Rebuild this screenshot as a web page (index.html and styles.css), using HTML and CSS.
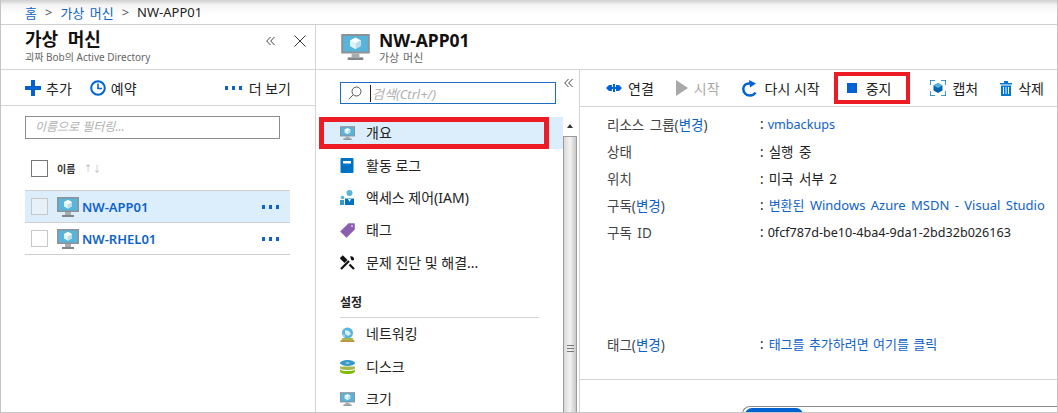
FILE: index.html
```html
<!DOCTYPE html>
<html lang="ko">
<head>
  <meta charset="UTF-8" />
  <title>NW-APP01 - 가상 머신</title>
  <link rel="stylesheet" href="styles.css">
</head>
<body>
  <svg class="defs" width="0" height="0">
    <symbol id="vm" viewBox="0 0 22 20">
      <rect x="0" y="0" width="22" height="15" fill="#8c9296"/>
      <rect x="1.5" y="1.5" width="19" height="12" fill="#59b4d9"/>
      <path d="M11 2.7l4 2.2v4.4l-4 2.3-4-2.3V4.900z" fill="#fff"/>
      <path d="M11 7.200l4-2.300v4.400l-4 2.300z" fill="#b8dff0"/>
      <path d="M11 7.200L7 4.900v4.400l4 2.300z" fill="#dff2fa"/>
      <rect x="8" y="15" width="6" height="3" fill="#a7acaf"/>
      <rect x="5" y="18" width="12" height="2" fill="#7f8589"/>
    </symbol>
    <symbol id="chev" viewBox="0 0 9 8">
      <path d="M4.500 0L.7 4l3.800 4M8.500 0L4.700 4l3.800 4" fill="none" stroke="#444"/>
    </symbol>
  </svg>

  <div class="frame">
    <nav class="crumbs">
      <a href="#">홈</a><span class="sep">&gt;</span><a href="#">가상 머신</a><span class="sep">&gt;</span><span>NW-APP01</span>
    </nav>

    <div class="panes">
      <!-- left list blade -->
      <section class="list-blade">
        <div class="blade-head">
          <div>
            <h1>가상 머신</h1>
            <p>괴짜 Bob의 Active Directory</p>
          </div>
          <div class="head-tools">
            <svg width="9" height="8"><use href="#chev"/></svg>
            <svg width="12" height="12" viewBox="0 0 12 12"><path d="M.5.5l11 11M11.500.5l-11 11" stroke="#333" fill="none"/></svg>
          </div>
        </div>

        <div class="list-tools">
          <span class="tool">
            <svg width="16" height="16" viewBox="0 0 16 16"><path d="M6 0h4v6h6v4h-6v6H6v-6H0V6h6z" fill="#0063d1"/></svg>추가
          </span>
          <span class="tool">
            <svg width="16" height="16" viewBox="0 0 16 16"><circle cx="8" cy="8" r="6.800" fill="none" stroke="#0063d1" stroke-width="2"/><path d="M8 3.500V8.500h4" fill="none" stroke="#0063d1" stroke-width="1.600"/></svg>예약
          </span>
          <span class="tool tool-more"><span class="dots"></span>더 보기</span>
        </div>

        <div class="filter">이름으로 필터링...</div>

        <div class="list-head">
          <span class="check check-dark"></span>
          <b>이름</b>
          <span class="sort">↑↓</span>
        </div>

        <div class="vm-row vm-row-on">
          <span class="check"></span>
          <svg class="vm-ico" width="22" height="20"><use href="#vm"/></svg>
          <a href="#">NW-APP01</a>
          <span class="dots"></span>
        </div>
        <div class="vm-row">
          <span class="check"></span>
          <svg class="vm-ico" width="22" height="20"><use href="#vm"/></svg>
          <a href="#">NW-RHEL01</a>
          <span class="dots"></span>
        </div>
      </section>

      <!-- resource blade -->
      <section class="res-blade">
        <div class="res-head">
          <svg width="29" height="26"><use href="#vm"/></svg>
          <div>
            <h2>NW-APP01</h2>
            <p>가상 머신</p>
          </div>
        </div>

        <div class="res-body">
          <aside class="menu">
            <div class="menu-top">
              <div class="search">
                <svg width="14" height="14" viewBox="0 0 14 14"><circle cx="8.500" cy="5.500" r="4.500" fill="none" stroke="#555"/><path d="M5.300 8.700L.8 13.200" stroke="#555" fill="none"/></svg>
                <span class="caret"></span>
                <span>검색(Ctrl+/)</span>
              </div>
              <svg class="chev-menu" width="9" height="8"><use href="#chev"/></svg>
            </div>

            <div class="menu-main">
              <div class="menu-list">
                <div class="menu-item menu-item-on">
                  <svg width="15" height="14"><use href="#vm"/></svg>개요
                  <span class="red-box red-box-menu"></span>
                </div>
                <div class="menu-item">
                  <svg width="15" height="15" viewBox="0 0 15 15"><rect x="0.500" width="13" height="15" rx="1" fill="#0072c6"/><rect x="3" y="3" width="8" height="2.500" fill="#fff"/></svg>활동 로그
                </div>
                <div class="menu-item">
                  <svg width="15" height="15" viewBox="0 0 15 15"><circle cx="9.500" cy="3" r="3" fill="#59b4d9"/><path d="M5 15V8.500h9V15z" fill="#0072c6"/><circle cx="2.500" cy="7.500" r="1.800" fill="#59b4d9"/><path d="M0 15v-5h4v5z" fill="#3999c6"/><path d="M8 9l1.500 3L11 9z" fill="#fff"/></svg>액세스 제어(IAM)
                </div>
                <div class="menu-item">
                  <svg width="15" height="15" viewBox="0 0 15 15"><path d="M8.500.3h5.200c.7 0 1.100.4 1.100 1.100v5.200L6.500 14.800 0.200 8.500z" fill="#8a5fb0"/><circle cx="12" cy="3" r="1" fill="#d9c6ea"/></svg>태그
                </div>
                <div class="menu-item">
                  <svg width="15" height="15" viewBox="0 0 15 15"><path d="M1 14L9 6M2 1l4 4-1.500 1.500-4-4M9.500 9.500L14 14" stroke="#111" stroke-width="2.200" fill="none"/><path d="M10 1.500a3 3 0 0 1 4 3.500l-2 .5-1-1-.5-2z" fill="#111"/></svg>문제 진단 및 해결...
                </div>

                <div class="menu-section">설정</div>

                <div class="menu-item">
                  <svg width="15" height="15" viewBox="0 0 15 15"><circle cx="7.500" cy="6" r="5.500" fill="#59b4d9"/><path d="M5 3l4 1 2 3-3 2-3-2zM3 7l2 2-1 1z" fill="#d8eef7"/><path d="M2.500 11h10l2 4H.5z" fill="#a3b94e"/><rect x="0.500" y="13.500" width="14" height="1.500" fill="#c98a3c"/></svg>네트워킹
                </div>
                <div class="menu-item">
                  <svg width="15" height="14" viewBox="0 0 15 14"><ellipse cx="7.500" cy="3" rx="7.500" ry="3" fill="#3999c6"/><ellipse cx="7.500" cy="3" rx="2" ry="0.700" fill="#b8dff0"/><path d="M0 6.500h15v1.500c0 1.200-3 2-7.500 2S0 9.200 0 8z" fill="#a3b94e"/><path d="M0 9.500c1 1 4 1.500 7.500 1.500s6.500-.5 7.500-1.500V11c0 1.700-3 3-7.500 3S0 12.700 0 11z" fill="#7fba00"/></svg>디스크
                </div>
                <div class="menu-item">
                  <svg width="15" height="14"><use href="#vm"/></svg>크기
                </div>
              </div>

              <div class="scroll">
                <span class="scroll-up"></span>
                <div class="scroll-thumb"><span class="grip"></span></div>
              </div>
            </div>
          </aside>

          <div class="detail">
            <div class="cmd-bar">
              <span class="cmd">
                <svg width="16" height="10" viewBox="0 0 16 10"><path d="M0 5l3-3h3v2h4V2h3l3 3-3 3h-3V6H6v2H3z" fill="#0063d1"/><path d="M7 1h2v3H7zM7 6h2v3H7z" fill="#0063d1"/></svg>연결
              </span>
              <span class="cmd cmd-off">
                <svg width="12" height="16" viewBox="0 0 12 16"><path d="M0 0l12 8-12 8z" fill="#a9a9a9"/></svg>시작
              </span>
              <span class="cmd cmd-restart">
                <svg width="15" height="17" viewBox="0 0 15 17"><path d="M8 3.500C3.500 3 1.300 6 1.300 9c0 3.500 2.700 6.500 6.700 6.500 2.500 0 4.500-1.200 5.500-3" fill="none" stroke="#0063d1" stroke-width="2.500"/><path d="M7 0l7 3.500-6 4z" fill="#0063d1"/></svg>다시 시작
              </span>
              <span class="cmd cmd-stop">
                <span class="stop-sq"></span>중지
                <span class="red-box"></span>
              </span>
              <span class="cmd">
                <svg width="16" height="16" viewBox="0 0 16 16"><path d="M0 5V0h5M11 0h5v5M16 11v5h-5M5 16H0v-5" fill="none" stroke="#0078d4" stroke-width="1.500"/><path d="M8 3l4.500 2.500v5L8 13l-4.500-2.500v-5z" fill="#0063b1"/><path d="M8 3l4.500 2.500L8 8 3.500 5.500z" fill="#59b4d9"/></svg>캡처
              </span>
              <span class="cmd">
                <svg width="12" height="15" viewBox="0 0 12 15"><path d="M0 2h12v1.500H0zM4 0h4v2H4z" fill="#0078d4"/><path d="M1 4.500h10V15H1z" fill="#0078d4"/><path d="M3.500 6v7M6 6v7M8.500 6v7" stroke="#fff"/></svg>삭제
              </span>
            </div>

            <div class="props">
              <div class="prop"><span class="prop-k">리소스 그룹(<a href="#">변경</a>)</span><span class="prop-v">:<a class="latin" href="#">vmbackups</a></span></div>
              <div class="prop"><span class="prop-k">상태</span><span class="prop-v">:<span class="val">실행 중</span></span></div>
              <div class="prop"><span class="prop-k">위치</span><span class="prop-v">:<span class="val">미국 서부 2</span></span></div>
              <div class="prop"><span class="prop-k">구독(<a href="#">변경</a>)</span><span class="prop-v">:<a class="val wide" href="#">변환된 Windows Azure MSDN - Visual Studio</a></span></div>
              <div class="prop"><span class="prop-k">구독 ID</span><span class="prop-v">:<span class="latin">0fcf787d-be10-4ba4-9da1-2bd32b026163</span></span></div>
              <div class="prop prop-tag"><span class="prop-k">태그(<a href="#">변경</a>)</span><span class="prop-v">:<a class="val tight" href="#">태그를 추가하려면 여기를 클릭</a></span></div>
            </div>

            <div class="bottom">
              <div class="pill"><span class="pill-on"></span></div>
            </div>
          </div>
        </div>
      </section>
    </div>
  </div>
</body>
</html>
```

FILE: styles.css
```css
* { margin: 0; padding: 0; box-sizing: border-box; }

html, body {
  width: 1058px;
  height: 413px;
  overflow: hidden;
  background: #fff;
}

body {
  font-family: "Noto Sans", "Noto Sans CJK KR", sans-serif;
  font-size: 14px;
  color: #222;
}

a { color: #0f62c9; text-decoration: none; }

.defs { position: absolute; }

.frame {
  width: 1058px;
  height: 413px;
  display: flex;
  flex-direction: column;
  border: 1px solid #c4c4c4;
  border-top: 0;
  overflow: hidden;
}

.crumbs {
  height: 25px;
  flex: none;
  display: flex;
  align-items: center;
  padding-left: 24px;
  font-size: 13px;
  word-spacing: 2px;
  background: linear-gradient(#cfcfcf 0, #f4f4f4 5px, #fff 14px);
  border-bottom: 1px solid #cfcfcf;
}

.sep { margin: 0 8px; color: #555; }

.panes { flex: 1; display: flex; min-height: 0; }

/* left blade */
.list-blade {
  width: 315px;
  flex: none;
  border-right: 1px solid #d4d4d4;
}

.blade-head {
  height: 45px;
  display: flex;
  justify-content: space-between;
  padding: 2px 9px 0 24px;
  border-bottom: 1px solid #d4d4d4;
}

.blade-head h1 { font-size: 18px; font-weight: 700; line-height: 24px; word-spacing: 5px; color: #111; }
.blade-head p { font-size: 10px; line-height: 12px; color: #666; }

.head-tools { display: flex; align-items: center; gap: 19px; height: 28px; }

.list-tools {
  height: 36px;
  display: flex;
  align-items: center;
  padding: 0 24px 0 24px;
  gap: 18px;
  border-bottom: 1px solid #d4d4d4;
}

.tool { display: flex; align-items: center; gap: 5px; }
.tool-more { margin-left: auto; gap: 6px; }

.dots {
  width: 20px;
  height: 4px;
  flex: none;
  background: radial-gradient(circle 2px, #0f62c9 95%, transparent) 0 0 / 7px 4px repeat-x;
}

.filter {
  width: 255px;
  height: 23px;
  margin: 10px 0 0 24px;
  padding: 0 9px;
  border: 1px solid #8c8c8c;
  font-size: 12px;
  line-height: 20px;
  font-style: italic;
  color: #b0b0b0;
}

.list-head {
  height: 51px;
  display: flex;
  align-items: center;
  margin-left: 30px;
  padding-top: 8px;
  font-size: 10px;
}

.list-head b { margin-left: 9px; color: #333; }
.sort { margin-left: 8px; font-size: 9px; color: #bbb; }

.check {
  width: 17px;
  height: 17px;
  flex: none;
  border: 1px solid #c8c8c8;
  background: #fff;
}

.check-dark { border-color: #777; }

.vm-row {
  width: 265px;
  height: 32px;
  margin-left: 24px;
  display: flex;
  align-items: center;
  padding: 0 10px 0 6px;
  border-top: 1px solid #cfcfcf;
  font-size: 13px;
  font-weight: 600;
}

.vm-row:last-child { height: 33px; border-bottom: 1px solid #cfcfcf; }
.vm-row-on { background: #dcedfb; }
.vm-row-on .check { background: #e6f1fa; }
.vm-ico { margin: 0 3px 0 9px; flex: none; }
.vm-row .dots { margin-left: auto; }

/* right blade */
.res-blade { flex: 1; min-width: 0; display: flex; flex-direction: column; }

.res-head {
  height: 45px;
  flex: none;
  display: flex;
  align-items: center;
  gap: 9px;
  padding: 0 0 0 25px;
  border-bottom: 1px solid #d4d4d4;
}

.res-head h2 { font-size: 17.500px; font-weight: 700; line-height: 21px; color: #111; }
.res-head p { font-size: 11px; line-height: 13px; word-spacing: 1px; color: #666; }

.res-body { flex: 1; display: flex; min-height: 0; }

.menu {
  width: 264px;
  flex: none;
  display: flex;
  flex-direction: column;
  border-right: 1px solid #d4d4d4;
}

.menu-top { height: 47px; flex: none; display: flex; padding: 12px 0 0 24px; }

.search {
  width: 216px;
  height: 22px;
  display: flex;
  align-items: center;
  padding-left: 7px;
  border: 1px solid #1b6ec2;
  font-size: 13px;
  font-style: italic;
  color: #b0b0b0;
}

.caret { width: 1px; height: 17px; margin: 0 1px 0 8px; background: #222; }

.chev-menu { margin: -3px 0 0 8px; }

.menu-main { flex: 1; display: flex; min-height: 0; }

.menu-list { flex: 1; padding-left: 3px; }

.menu-item {
  height: 32.400px;
  display: flex;
  align-items: center;
  gap: 11px;
  padding: 0 0 2px 21px;
  position: relative;
}

.menu-item svg { flex: none; margin-top: 2px; }
.menu-item-on { background: #dcedfb; }

.menu-section {
  height: 33px;
  margin: 6px 24px 0 21px;
  padding-top: 8px;
  font-size: 12px;
  font-weight: 600;
  border-bottom: 1px solid #d4d4d4;
}

.red-box { position: absolute; border: 4px solid #ed1c24; inset: 0; }
.red-box-menu { border-width: 5px; right: 14px; }

.scroll {
  width: 16px;
  flex: none;
  position: relative;
  background: #fff;
}

.scroll-up {
  position: absolute;
  top: 7px;
  left: 4px;
  border: 3px solid transparent;
  border-top: 0;
  border-bottom: 4px solid #333;
}

.scroll-thumb {
  position: absolute;
  top: 19px;
  bottom: -149px;
  left: 0;
  right: 2px;
  display: flex;
  align-items: center;
  justify-content: center;
  background: linear-gradient(90deg, #d8d8d8, #f4f4f4 50%, #c8c8c8);
  border: 1px solid #9a9a9a;
}

.grip {
  width: 7px;
  height: 7px;
  border-top: 1px solid #777;
  border-bottom: 1px solid #777;
  background: linear-gradient(#777, #777) center / 7px 1px no-repeat;
}

.detail { flex: 1; min-width: 0; display: flex; flex-direction: column; }

.cmd-bar {
  height: 37px;
  flex: none;
  display: flex;
  align-items: center;
  padding-left: 26px;
  border-bottom: 1px solid #d4d4d4;
}

.cmd {
  display: flex;
  align-items: center;
  gap: 6px;
  margin-right: 22px;
  position: relative;
  white-space: nowrap;
}

.cmd-off { color: #a9a9a9; }
.cmd-restart { gap: 8px; }
.cmd-stop { padding: 0 19px 0 13px; height: 32px; margin: 0 20px 0 -8px; gap: 9px; }

.stop-sq { width: 10px; height: 10px; background: #0063d1; }

.props { flex: 1; padding: 3px 0 0 27px; font-size: 13.500px; }

.prop { height: 27px; display: flex; align-items: center; white-space: nowrap; }
.prop-tag { margin-top: 85px; }
.prop-k { width: 153px; flex: none; color: #444; word-spacing: 2px; }
.prop-v { color: #222; }

.val { margin-left: 5px; word-spacing: 2px; }
.latin { margin-left: 4px; font-size: 12.600px; }
.wide { font-size: 13px; }
.tight { font-size: 13px; word-spacing: 1px; }

.bottom { height: 33px; flex: none; padding: 26px 0 0 162px; border-top: 1px solid #d4d4d4; }

.pill {
  height: 14px;
  border: 1px solid #8a8a8a;
  border-right: 0;
  border-radius: 8px 0 0 0;
  padding: 1px 0 0 2px;
}

.pill-on { display: block; width: 58px; height: 12px; border-radius: 7px 7px 0 0; background: #0063d1; }
```
